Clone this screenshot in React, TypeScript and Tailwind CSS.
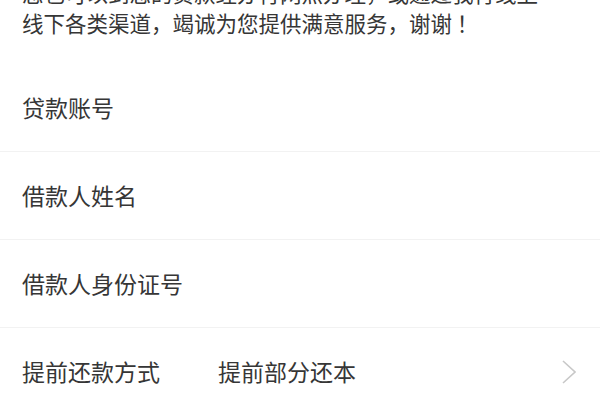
const font = { fontFamily: '"Noto Sans CJK SC", "Noto Sans", sans-serif' };

const rows = [
  { label: '贷款账号' },
  { label: '借款人姓名' },
  { label: '借款人身份证号' },
  { label: '提前还款方式', value: '提前部分还本', arrow: true },
];

export default function App() {
  return (
    <div className="h-[400px] w-[600px] overflow-hidden bg-white text-[#363636]" style={font}>
      {/* notice text, scrolled so the first line is cut off */}
      <p className="-mt-[22px] mb-[26px] px-[22px] text-[21.5px] leading-[30px]">
        您也可以到您的贷款经办行网点办理，或通过我行线上
        <br />
        线下各类渠道，竭诚为您提供满意服务，谢谢 ！
      </p>

      <div>
        {rows.map((row) => (
          <div
            key={row.label}
            className="flex h-[88px] items-center border-b border-[#f2f2f2] pl-[22px] pr-[24px] text-[23px]"
          >
            <span className="w-[196px] shrink-0">{row.label}</span>
            <span className="flex-1">{row.value}</span>
            {row.arrow && (
              <svg width="14" height="24" viewBox="0 0 14 24" fill="none">
                <polyline points="1,1 13,12 1,23" stroke="#c8c8c8" strokeWidth="1.6" />
              </svg>
            )}
          </div>
        ))}
      </div>
    </div>
  );
}
